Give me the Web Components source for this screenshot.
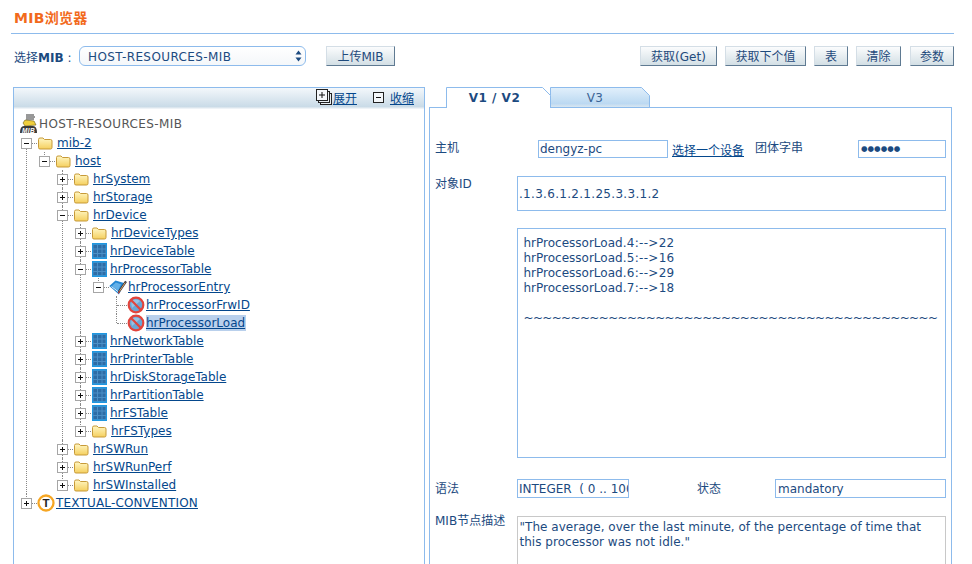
<!DOCTYPE html>
<html>
<head>
<meta charset="utf-8">
<title>MIB</title>
<style>
  html, body { margin: 0; height: 100%; overflow: hidden; background: #fff; }
  body { font: 12px "DejaVu Sans", "Noto Sans CJK SC", sans-serif; color: #1c4a80; }
</style>
</head>
<body>
<mib-app></mib-app>

<script>
const CJK = '"DejaVu Sans", "Noto Sans CJK SC", sans-serif';

const ICONS = {
  folder: `<svg width="16" height="13" viewBox="0 0 16 13">
    <defs><linearGradient id="f" x1="0" y1="0" x2="0" y2="1"><stop offset="0" stop-color="#fff7c4"/><stop offset="1" stop-color="#f5cf5e"/></linearGradient></defs>
    <path d="M1.5 2.5 q0-1.5 1.5-1.5 h3 l1.500 1.500 h6 q1.500 0 1.500 1.500 v6.500 q0 1.500-1.500 1.500 h-10.500 q-1.500 0-1.500-1.500z" fill="url(#f)" stroke="#c79a38"/>
  </svg>`,
  table: `<svg width="15" height="16" viewBox="0 0 15 16">
    <rect width="15" height="16" fill="#1f97e0"/>
    <rect x="1" y="1.500" width="13" height="13" fill="#4a8fc6"/>
    <g fill="#2d6da6">
      <rect x="1.500" y="2" width="3.500" height="3.500"/><rect x="6" y="2" width="3.500" height="3.500"/><rect x="10.500" y="2" width="3" height="3.500"/>
      <rect x="1.500" y="6.500" width="3.500" height="3.500"/><rect x="6" y="6.500" width="3.500" height="3.500"/><rect x="10.500" y="6.500" width="3" height="3.500"/>
      <rect x="1.500" y="11" width="3.500" height="3"/><rect x="6" y="11" width="3.500" height="3"/><rect x="10.500" y="11" width="3" height="3"/>
    </g>
  </svg>`,
  entry: `<svg width="18" height="15" viewBox="0 0 18 15">
    <path d="M0.300 6 L6.500 0.500 L15 3 L10 14.500 Z" fill="#2386d2"/>
    <path d="M3 6 L6.800 2.600 L12 4.200 L9 11 Z" fill="#62b0e8"/>
    <path d="M2.500 6.500 L9.500 12" stroke="#e4f2fc" stroke-width="1"/>
    <path d="M9.800 12 L17 1.300" stroke="#33333f" stroke-width="2.200"/>
    <path d="M10.300 11.500 L16.200 2.600" stroke="#e8a860" stroke-width="1"/>
    <path d="M8.800 14 L9.600 11.200 L11.300 12.300 Z" fill="#b8342a"/>
  </svg>`,
  nope: `<svg width="18" height="18" viewBox="0 0 18 18">
    <circle cx="9" cy="9" r="7.500" fill="#6aa7d6"/>
    <path d="M5 4.500 Q9 2.500 13 5 L5 12 Q3.500 8 5 4.500Z" fill="#a9cde8" opacity=".7"/>
    <circle cx="9" cy="9" r="7.300" fill="none" stroke="#e2443c" stroke-width="2.200"/>
    <path d="M3.800 3.800 L14.200 14.200" stroke="#e2443c" stroke-width="2.200"/>
  </svg>`,
  ring: `<svg width="18" height="18" viewBox="0 0 18 18">
    <circle cx="9" cy="9" r="7.500" fill="#fff" stroke="#f6a623" stroke-width="2.300"/>
    <text x="9" y="13" text-anchor="middle" font-family="Liberation Sans, sans-serif" font-size="11.500" font-weight="700" fill="#222">T</text>
  </svg>`,
  mib: `<svg width="19" height="20" viewBox="0 0 19 20">
    <path d="M7 1h8M7 3h9M7 5h8" stroke="#333" stroke-width="1"/>
    <path d="M4 9 L6 6 L15 7 L17 11 L6 12Z" fill="#f0cf3c" stroke="#6a5a10" stroke-width=".6"/>
    <path d="M1 19 Q1 12 5 12 H14 Q18 12 18 19Z" fill="#3a3a3a"/>
    <text x="9.500" y="18.500" text-anchor="middle" font-family="Liberation Sans, sans-serif" font-size="6.500" font-weight="700" font-style="italic" fill="#fff">MIB</text>
  </svg>`
};
// gap between icon and label, and shift of the icon itself
const ICON_GAP = { folder: 4, table: 3, entry: 1, nope: 1, ring: 1 };
const ICON_SHIFT = { table: 1 };

// small base class, every element here only needs a shadow with fixed html
class ShadowEl extends HTMLElement {
  constructor() {
    super();
    this.localShadow = this.attachShadow({ mode: "open" });
  }
  connectedCallback() {
    this.render();
  }
}

class MibButton extends ShadowEl {
  render() {
    this.localShadow.innerHTML = `
      <style>
        :host { display: inline-flex; box-sizing: border-box; height: 20px; align-items: center; justify-content: center;
          border: 1px solid; border-color: #d4dee6 #5f7a92 #5f7a92 #d4dee6;
          background: linear-gradient(#fbfcfd, #e9eff2 45%, #d3dfe5); color: #1f4a7c; font-size: 12px;
          width: var(--w, auto); padding-bottom: 1px; white-space: nowrap; }
      </style><slot></slot>`;
  }
}

class MibSelect extends ShadowEl {
  render() {
    this.localShadow.innerHTML = `
      <style>
        :host { display: flex; align-items: center; justify-content: space-between; box-sizing: border-box; width: 227px; height: 20px;
          border: 1px solid #8dbbec; border-radius: 6px; background: linear-gradient(#fff, #f4f7fa); padding: 1px 3px 0 8px; color: #1c4a80; letter-spacing: .4px; }
        svg { display: block; margin-top: -1px; }
      </style>
      <slot></slot>
      <svg width="7" height="12" viewBox="0 0 7 12"><path d="M3.500 0.500 L6.500 4.500 H0.500Z M3.500 11.500 L6.500 7.500 H0.500Z" fill="#1c4a80"/></svg>`;
  }
}

class TreeNode extends ShadowEl {
  render() {
    const toggle = this.getAttribute("toggle");
    const icon = this.getAttribute("icon");
    const box = toggle
      ? `<span class="box"><svg width="9" height="9" viewBox="0 0 9 9"><path d="M2 4.500h5${toggle == "plus" ? "M4.500 2v5" : ""}" stroke="#111" stroke-width="1"/></svg></span>`
      : `<span class="box none"></span>`;
    this.localShadow.innerHTML = `
      <style>
        :host { display: block; position: relative; }
        :host::before { content: ""; position: absolute; left: 4px; top: 0; bottom: 0; border-left: 1px dotted #888; }
        :host(:last-child)::before { bottom: auto; height: 9px; }
        :host([noup])::before { top: 9px; }
        .row { display: flex; align-items: center; height: 18px; position: relative; }
        .box { box-sizing: border-box; width: 9px; height: 9px; flex: none; background: #fff; border: 0; outline: 1px solid #a6a6a6; position: relative; z-index: 1; }
        .box svg { display: block; }
        .box.none { background: none; outline: 0; }
        .dash { width: 6px; flex: none; border-top: 1px dotted #888; }
        .box.none + .dash { width: 10px; margin-left: -4px; }
        .ico { flex: none; display: flex; margin-left: ${ICON_SHIFT[icon] || 0}px; }
        .ico svg { display: block; }
        a { margin-left: ${ICON_GAP[icon]}px; color: #04478c; text-decoration: underline; white-space: nowrap; padding: 0 1px 0 0; }
        :host([selected]) a { background: #b9d0ec; padding: 1px 1px 1px 0; }
        :host([wide]) a { letter-spacing: .17px; }
        .kids { margin-left: 18px; }
      </style>
      <div class="row">${box}<span class="dash"></span><span class="ico">${ICONS[icon]}</span><a part="label">${this.getAttribute("label")}</a></div>
      <div class="kids"><slot></slot></div>`;
  }
}

class MibTree extends ShadowEl {
  render() {
    this.localShadow.innerHTML = `
      <style>
        :host { display: block; padding: 7px 0 0 8px; }
        .root { display: flex; align-items: center; height: 18px; margin: 0 0 1px -3px; color: #555; white-space: nowrap; letter-spacing: .4px; }
        .root svg { display: block; margin-right: 1px; }
      </style>
      <div class="root">${ICONS.mib}<span>${this.getAttribute("root")}</span></div>
      <slot></slot>`;
  }
}

class TreePanel extends ShadowEl {
  render() {
    this.localShadow.innerHTML = `
      <style>
        :host { display: block; box-sizing: border-box; width: 412px; height: 560px; border: 1px solid #8dbbec; border-bottom: 0; }
        .bar { display: flex; justify-content: flex-end; align-items: center; height: 20px; box-sizing: border-box; padding-right: 10px;
          background: linear-gradient(#f3f7fb, #c9dbe7); border-bottom: 1px solid #dbe6ee; box-shadow: 0 1px 0 #eef3f7; }
        u { color: #04478c; }
        svg { display: block; }
        .gap { width: 16px; }
      </style>
      <div class="bar">
        <svg width="17" height="17" viewBox="0 0 17 17"><rect x="4.500" y="4.500" width="11" height="11" fill="#e8eef2" stroke="#222"/><rect x="2.500" y="2.500" width="11" height="11" fill="#e8eef2" stroke="#222"/><rect x="0.500" y="0.500" width="11" height="11" fill="#f4f7fa" stroke="#222"/><path d="M3 6h6M6 3v6" stroke="#111"/></svg>
        <u>展开</u>
        <span class="gap"></span>
        <svg width="11" height="11" viewBox="0 0 11 11" style="margin-right:6px"><rect x="0.500" y="0.500" width="10" height="10" fill="#f4f7fa" stroke="#222"/><path d="M3 5.500h5" stroke="#111"/></svg>
        <u>收缩</u>
      </div>
      <slot></slot>`;
  }
}

class MibTab extends ShadowEl {
  render() {
    const w = +this.getAttribute("w");
    const on = this.hasAttribute("active");
    this.localShadow.innerHTML = `
      <style>
        :host { display: flex; position: relative; align-items: center; justify-content: center; width: ${w}px; height: 21px; flex: none;
          margin-bottom: -1px; z-index: ${on ? 2 : 1}; font-size: 12px; color: ${on ? "#1c4a80" : "#3b6494"}; font-weight: ${on ? 700 : 400}; letter-spacing: ${on ? ".5px" : ".3px"}; }
        svg { position: absolute; left: 0; top: 0; }
        span { position: relative; padding-top: 1px; padding-right: ${on ? 8 : 10}px; }
      </style>
      <svg width="${w}" height="21" viewBox="0 0 ${w} 21">
        <defs><linearGradient id="g" x1="0" y1="0" x2="0" y2="1"><stop offset="0" stop-color="#e2f0fb"/><stop offset=".8" stop-color="#bcd9f2"/><stop offset="1" stop-color="#dde8f0"/></linearGradient></defs>
        <path d="M0.500 ${on ? 21 : 20.500} V0.500 H${w - 8.500} L${w - 0.500} 8.500 V${on ? 21 : 20.500} ${on ? "" : "Z"}" fill="${on ? "#fff" : "url(#g)"}" stroke="#8dbbec"/>
      </svg>
      <span><slot></slot></span>`;
  }
}

class FieldBox extends ShadowEl {
  render() {
    this.localShadow.innerHTML = `
      <style>
        :host { display: block; box-sizing: border-box; border: 1.500px solid #8dbbec; background: #fff; color: #1c4a80;
          overflow: hidden; padding: 0 1px; line-height: 17px; flex: none; }
        :host([grey]) { border-color: #c8c8c8; padding: 3px 1.500px; line-height: 15px; letter-spacing: .03px; }
        :host([multi]) { line-height: 15px; }
        div { white-space: pre; }
        :host([grey]) div { white-space: normal; }
      </style>
      <div><slot></slot></div>`;
  }
}

class FormRow extends ShadowEl {
  render() {
    this.localShadow.innerHTML = `
      <style>
        :host { display: flex; align-items: var(--al, center); flex: none; }
      </style><slot></slot>`;
  }
}

class MibApp extends ShadowEl {
  render() {
    this.localShadow.innerHTML = `
      <style>
        :host { display: block; height: 564px; overflow: hidden; font: 12px ${CJK}; color: #1c4a80; padding-left: 13px; box-sizing: border-box; }
        .title { margin-left: -2px; width: 943px; border-bottom: 1px solid #8dbbec; padding-left: 3px; box-sizing: border-box; height: 34px;
          color: #f26a1c; font-size: 14px; font-weight: 700; line-height: 36px; letter-spacing: .3px; }
        .tools { display: flex; align-items: center; height: 20px; margin-top: 12px; width: 941px; }
        .tools b { font-weight: 700; }
        .lbl { width: 65px; margin-left: 1px; white-space: nowrap; }
        .push { flex: 1; }
        .btns { display: flex; gap: 8px; }
        .main { display: flex; gap: 4px; margin-top: 21px; }
        .right { width: 523px; }
        .tabs { display: flex; padding-left: 17px; position: relative; }
        .tabs mib-tab + mib-tab { margin-left: -1px; }
        .body { box-sizing: border-box; height: 560px; border: 1px solid #8dbbec; border-bottom: 0; padding: 32px 5px 0 5px; display: flex; flex-direction: column; }
        .body u { color: #04478c; white-space: nowrap; }
        .k { white-space: nowrap; }
        pre { margin: 0; font: inherit; }
        .s { letter-spacing: .3px; }
        .t { letter-spacing: -.65px; }
      </style>
      <div class="title">MIB浏览器</div>
      <div class="tools">
        <span class="lbl">选择<b>MIB</b> :</span>
        <mib-select>HOST-RESOURCES-MIB</mib-select>
        <mib-button style="--w:69px;margin-left:20px">上传MIB</mib-button>
        <span class="push"></span>
        <div class="btns">
          <mib-button style="--w:77px">获取(Get)</mib-button>
          <mib-button style="--w:81px">获取下个值</mib-button>
          <mib-button style="--w:34px">表</mib-button>
          <mib-button style="--w:45px">清除</mib-button>
          <mib-button style="--w:44px;margin-left:1px">参数</mib-button>
        </div>
      </div>
      <div class="main">
        <tree-panel>
          <mib-tree root="HOST-RESOURCES-MIB">
            <tree-node noup toggle="minus" icon="folder" label="mib-2">
              <tree-node toggle="minus" icon="folder" label="host">
                <tree-node toggle="plus" icon="folder" label="hrSystem"></tree-node>
                <tree-node toggle="plus" icon="folder" label="hrStorage"></tree-node>
                <tree-node toggle="minus" icon="folder" label="hrDevice">
                  <tree-node toggle="plus" icon="folder" label="hrDeviceTypes"></tree-node>
                  <tree-node toggle="plus" icon="table" label="hrDeviceTable"></tree-node>
                  <tree-node toggle="minus" icon="table" label="hrProcessorTable">
                    <tree-node toggle="minus" icon="entry" label="hrProcessorEntry">
                      <tree-node icon="nope" label="hrProcessorFrwID"></tree-node>
                      <tree-node icon="nope" selected label="hrProcessorLoad"></tree-node>
                    </tree-node>
                  </tree-node>
                  <tree-node toggle="plus" icon="table" label="hrNetworkTable"></tree-node>
                  <tree-node toggle="plus" icon="table" label="hrPrinterTable"></tree-node>
                  <tree-node toggle="plus" icon="table" label="hrDiskStorageTable"></tree-node>
                  <tree-node toggle="plus" icon="table" label="hrPartitionTable"></tree-node>
                  <tree-node toggle="plus" icon="table" label="hrFSTable"></tree-node>
                  <tree-node toggle="plus" icon="folder" label="hrFSTypes"></tree-node>
                </tree-node>
                <tree-node toggle="plus" icon="folder" label="hrSWRun"></tree-node>
                <tree-node toggle="plus" icon="folder" label="hrSWRunPerf"></tree-node>
                <tree-node toggle="plus" icon="folder" label="hrSWInstalled"></tree-node>
              </tree-node>
            </tree-node>
            <tree-node toggle="plus" icon="ring" wide label="TEXTUAL-CONVENTION"></tree-node>
          </mib-tree>
        </tree-panel>
        <div class="right">
          <div class="tabs">
            <mib-tab w="105" active>V1 / V2</mib-tab>
            <mib-tab w="100">V3</mib-tab>
          </div>
          <div class="body">
            <form-row style="height:18px">
              <span class="k" style="width:103px;margin-top:-6px">主机</span>
              <field-box style="width:130px;height:18px">dengyz-pc</field-box>
              <u style="margin-left:4px;width:83px">选择一个设备</u>
              <span class="k" style="width:103px;margin-top:-6px">团体字串</span>
              <field-box style="width:88px;height:18px;font-size:7.500px;letter-spacing:0;padding-left:2px;line-height:16px">●●●●●●</field-box>
            </form-row>
            <form-row style="height:35px;margin-top:18px">
              <span class="k" style="width:82px;margin-top:-23px">对象ID</span>
              <field-box style="width:429px;height:35px;line-height:35px;letter-spacing:.3px">.1.3.6.1.2.1.25.3.3.1.2</field-box>
            </form-row>
            <form-row style="margin-top:17px">
              <span style="width:82px"></span>
              <field-box multi style="width:429px;height:230px;padding:7px 5.500px"><pre>hrProcessorLoad<span class="s">.4:--&gt;22</span>
hrProcessorLoad<span class="s">.5:--&gt;16</span>
hrProcessorLoad<span class="s">.6:--&gt;29</span>
hrProcessorLoad<span class="s">.7:--&gt;18</span>

<span class="t">~~~~~~~~~~~~~~~~~~~~~~~~~~~~~~~~~~~~~~~~~~~~</span></pre></field-box>
            </form-row>
            <form-row style="margin-top:21px;height:19px">
              <span class="k" style="width:82px;margin-top:-2px">语法</span>
              <field-box style="width:112px;height:19px;line-height:18px">INTEGER  ( 0 .. 100 )</field-box>
              <span class="k" style="width:78px;margin-left:68px;margin-top:-2px">状态</span>
              <field-box style="width:171px;height:19px;line-height:18px;padding-left:2px">mandatory</field-box>
            </form-row>
            <form-row style="--al:flex-start;margin-top:18px">
              <span class="k" style="width:82px;margin-top:-5px">MIB节点描述</span>
              <field-box grey style="width:429px;height:90px">"The average, over the last minute, of the percentage of time that this processor was not idle."</field-box>
            </form-row>
          </div>
        </div>
      </div>`;
  }
}

customElements.define("mib-button", MibButton);
customElements.define("mib-select", MibSelect);
customElements.define("tree-node", TreeNode);
customElements.define("mib-tree", MibTree);
customElements.define("tree-panel", TreePanel);
customElements.define("mib-tab", MibTab);
customElements.define("field-box", FieldBox);
customElements.define("form-row", FormRow);
customElements.define("mib-app", MibApp);
</script>
</body>
</html>
